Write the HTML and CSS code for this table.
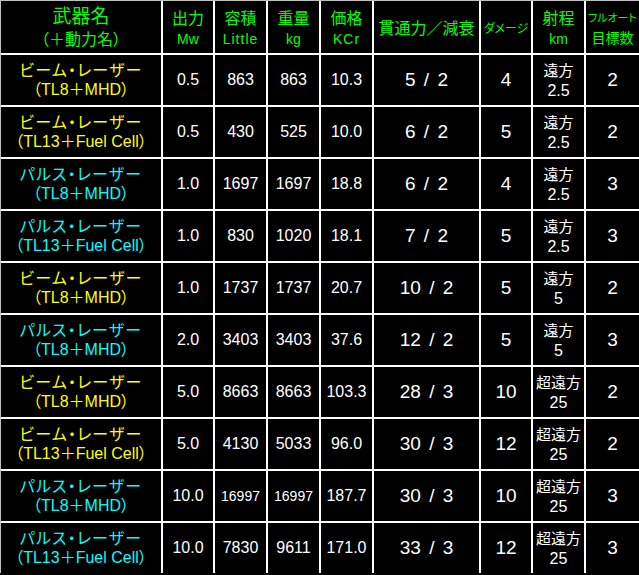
FILE: index.html
```html
<!DOCTYPE html>
<html lang="ja">
<head>
<meta charset="utf-8">
<title>レーザー兵器一覧</title>
<link rel="stylesheet" href="styles.css">
</head>
<body>
<table class="weapons">
  <colgroup>
    <col class="c-name"><col class="c-s"><col class="c-m"><col class="c-m"><col class="c-m"><col class="c-pen"><col class="c-s"><col class="c-m"><col class="c-last">
  </colgroup>
  <thead>
    <tr>
      <th><span class="h-big">武器名</span><br><span class="h-mid">（＋動力名）</span></th>
      <th><span class="h-mid">出力</span><br><span class="h-unit">Mw</span></th>
      <th><span class="h-mid">容積</span><br><span class="h-unit wide">Little</span></th>
      <th><span class="h-mid">重量</span><br><span class="h-unit">kg</span></th>
      <th><span class="h-mid">価格</span><br><span class="h-unit wide">KCr</span></th>
      <th><span class="h-mid">貫通力／減衰</span></th>
      <th><span class="h-small">ダメージ</span></th>
      <th><span class="h-mid">射程</span><br><span class="h-unit">km</span></th>
      <th><span class="h-tiny">フルオート</span><br><span class="h-sub">目標数</span></th>
    </tr>
  </thead>
  <tbody>
    <tr>
      <td class="name beam"><span class="kana">ビーム・レーザー</span><br>（TL8＋MHD）</td>
      <td class="num">0.5</td><td class="num">863</td><td class="num">863</td><td class="num">10.3</td>
      <td class="big">5 / 2</td><td class="big">4</td><td class="range">遠方<br><span class="rn">2.5</span></td><td class="big">2</td>
    </tr>
    <tr>
      <td class="name beam"><span class="kana">ビーム・レーザー</span><br>（TL13＋Fuel Cell）</td>
      <td class="num">0.5</td><td class="num">430</td><td class="num">525</td><td class="num">10.0</td>
      <td class="big">6 / 2</td><td class="big">5</td><td class="range">遠方<br><span class="rn">2.5</span></td><td class="big">2</td>
    </tr>
    <tr>
      <td class="name pulse"><span class="kana">パルス・レーザー</span><br>（TL8＋MHD）</td>
      <td class="num">1.0</td><td class="num">1697</td><td class="num">1697</td><td class="num">18.8</td>
      <td class="big">6 / 2</td><td class="big">4</td><td class="range">遠方<br><span class="rn">2.5</span></td><td class="big">3</td>
    </tr>
    <tr>
      <td class="name pulse"><span class="kana">パルス・レーザー</span><br>（TL13＋Fuel Cell）</td>
      <td class="num">1.0</td><td class="num">830</td><td class="num">1020</td><td class="num">18.1</td>
      <td class="big">7 / 2</td><td class="big">5</td><td class="range">遠方<br><span class="rn">2.5</span></td><td class="big">3</td>
    </tr>
    <tr>
      <td class="name beam"><span class="kana">ビーム・レーザー</span><br>（TL8＋MHD）</td>
      <td class="num">1.0</td><td class="num">1737</td><td class="num">1737</td><td class="num">20.7</td>
      <td class="big">10 / 2</td><td class="big">5</td><td class="range">遠方<br><span class="rn">5</span></td><td class="big">2</td>
    </tr>
    <tr>
      <td class="name pulse"><span class="kana">パルス・レーザー</span><br>（TL8＋MHD）</td>
      <td class="num">2.0</td><td class="num">3403</td><td class="num">3403</td><td class="num">37.6</td>
      <td class="big">12 / 2</td><td class="big">5</td><td class="range">遠方<br><span class="rn">5</span></td><td class="big">3</td>
    </tr>
    <tr>
      <td class="name beam"><span class="kana">ビーム・レーザー</span><br>（TL8＋MHD）</td>
      <td class="num">5.0</td><td class="num">8663</td><td class="num">8663</td><td class="num">103.3</td>
      <td class="big">28 / 3</td><td class="big">10</td><td class="range">超遠方<br><span class="rn">25</span></td><td class="big">2</td>
    </tr>
    <tr>
      <td class="name beam"><span class="kana">ビーム・レーザー</span><br>（TL13＋Fuel Cell）</td>
      <td class="num">5.0</td><td class="num">4130</td><td class="num">5033</td><td class="num">96.0</td>
      <td class="big">30 / 3</td><td class="big">12</td><td class="range">超遠方<br><span class="rn">25</span></td><td class="big">2</td>
    </tr>
    <tr>
      <td class="name pulse"><span class="kana">パルス・レーザー</span><br>（TL8＋MHD）</td>
      <td class="num">10.0</td><td class="num tiny">16997</td><td class="num tiny">16997</td><td class="num">187.7</td>
      <td class="big">30 / 3</td><td class="big">10</td><td class="range">超遠方<br><span class="rn">25</span></td><td class="big">3</td>
    </tr>
    <tr>
      <td class="name pulse"><span class="kana">パルス・レーザー</span><br>（TL13＋Fuel Cell）</td>
      <td class="num">10.0</td><td class="num">7830</td><td class="num">9611</td><td class="num">171.0</td>
      <td class="big">33 / 3</td><td class="big">12</td><td class="range">超遠方<br><span class="rn">25</span></td><td class="big">3</td>
    </tr>
  </tbody>
</table>
</body>
</html>
```

FILE: styles.css
```css
html, body {
  margin: 0;
  padding: 0;
  background: #000;
}

.weapons {
  table-layout: fixed;
  width: 639px;
  border-collapse: separate;
  border-spacing: 0;
  background: #000;
  border-top: 1px solid #c0c0c0;
  border-left: 1px solid #c0c0c0;
  font-family: "Liberation Sans", "Noto Sans CJK JP", sans-serif;
  font-feature-settings: "palt";
  color: #fff;
}

.c-name { width: 160px; }
.c-s { width: 52px; }
.c-m { width: 53px; }
.c-pen { width: 107px; }
.c-last { width: 55px; }

.weapons th,
.weapons td {
  height: 50px;
  padding: 0;
  border-left: 2px solid #fff;
  border-top: 2px solid #fff;
  text-align: center;
  vertical-align: middle;
  white-space: nowrap;
}

.weapons th {
  height: 51px;
  padding-top: 1px;
  border-top: 0;
  color: #00ff00;
  font-weight: normal;
  line-height: 20px;
}

.weapons th:first-child,
.weapons td:first-child {
  border-left: 0;
}

.h-big {
  font-family: "Noto Sans CJK JP", sans-serif;
  font-size: 19px;
}
.h-mid {
  font-family: "Noto Sans CJK JP", sans-serif;
  font-size: 16px;
}
.h-small {
  font-family: "Noto Sans CJK JP", sans-serif;
  font-size: 12px;
}
.h-tiny {
  font-family: "Noto Sans CJK JP", sans-serif;
  font-size: 11px;
}
.h-sub {
  font-family: "Noto Sans CJK JP", sans-serif;
  font-size: 14px;
}
.h-unit {
  font-size: 14px;
}
.h-unit.wide {
  letter-spacing: 1px;
}

.name {
  font-size: 16px;
  line-height: 19px;
  padding-top: 2px;
}
.kana {
  letter-spacing: 1.2px;
}
.beam { color: #ffff00; }
.pulse { color: #00ffff; }

.num {
  font-size: 16px;
}
.num.tiny {
  font-size: 14px;
}

.big {
  font-size: 19px;
  word-spacing: 3px;
}

.range {
  font-family: "Noto Sans CJK JP", sans-serif;
  font-size: 15px;
  line-height: 20px;
}
.rn {
  font-family: "Liberation Sans", sans-serif;
  font-size: 16px;
}
```
